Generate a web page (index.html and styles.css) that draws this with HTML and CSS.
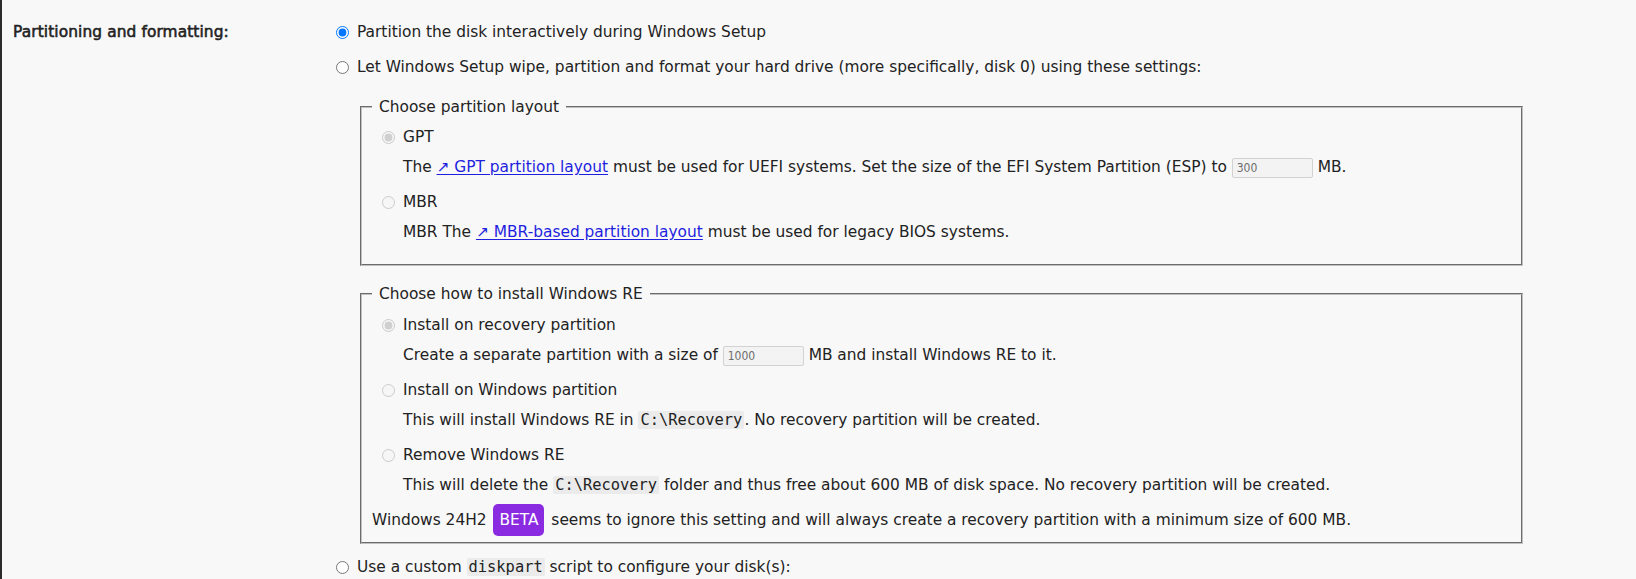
FILE: index.html
```html
<!DOCTYPE html>
<html lang="en">
<head>
<meta charset="utf-8">
<title>Partitioning and formatting</title>
<link rel="stylesheet" href="styles.css">
</head>
<body>
<div class="page">
  <div class="setting">
    <div class="setting-label">Partitioning and formatting:</div>
    <div class="setting-body">
      <label class="opt"><input type="radio" name="part" checked><span>Partition the disk interactively during Windows Setup</span></label>
      <label class="opt"><input type="radio" name="part"><span>Let Windows Setup wipe, partition and format your hard drive (more specifically, disk 0) using these settings:</span></label>

      <fieldset class="group group-layout">
        <legend>Choose partition layout</legend>
        <label class="opt sub"><input type="radio" name="layout" checked disabled><span>GPT</span></label>
        <div class="desc">The <a href="#" class="ext">↗ GPT partition layout</a> must be used for UEFI systems. Set the size of the EFI System Partition (ESP) to <input class="num" type="text" value="300" disabled> MB.</div>
        <label class="opt sub"><input type="radio" name="layout" disabled><span>MBR</span></label>
        <div class="desc">MBR The <a href="#" class="ext">↗ MBR-based partition layout</a> must be used for legacy BIOS systems.</div>
      </fieldset>

      <fieldset class="group group-re">
        <legend>Choose how to install Windows RE</legend>
        <label class="opt sub"><input type="radio" name="re" checked disabled><span>Install on recovery partition</span></label>
        <div class="desc">Create a separate partition with a size of <input class="num" type="text" value="1000" disabled> MB and install Windows RE to it.</div>
        <label class="opt sub"><input type="radio" name="re" disabled><span>Install on Windows partition</span></label>
        <div class="desc">This will install Windows RE in <code>C:\Recovery</code>. No recovery partition will be created.</div>
        <label class="opt sub"><input type="radio" name="re" disabled><span>Remove Windows RE</span></label>
        <div class="desc">This will delete the <code>C:\Recovery</code> folder and thus free about 600 MB of disk space. No recovery partition will be created.</div>
        <div class="note">Windows 24H2 <span class="badge">BETA</span> seems to ignore this setting and will always create a recovery partition with a minimum size of 600 MB.</div>
      </fieldset>

      <label class="opt opt-last"><input type="radio" name="part"><span>Use a custom <code>diskpart</code> script to configure your disk(s):</span></label>
    </div>
  </div>
</div>
</body>
</html>
```

FILE: styles.css
```css
html, body {
  margin: 0;
  padding: 0;
  background: #f8f8f8;
}

body {
  border-left: 2px solid #2b2b2b;
  min-height: 579px;
  box-sizing: border-box;
  font-family: "DejaVu Sans", sans-serif;
  font-size: 15.4px;
  color: #222;
  overflow: hidden;
}

.page {
  padding: 17px 0 0 11px;
}

.setting {
  display: grid;
  grid-template-columns: 323px 1fr;
}

.setting-label {
  height: 30px;
  line-height: 30px;
  letter-spacing: 0.1px;
  -webkit-text-stroke: 0.55px #222;
}

.setting-body {
  display: flex;
  flex-direction: column;
}

.opt {
  display: flex;
  align-items: center;
  height: 30px;
  margin-top: 5px;
  white-space: nowrap;
}

.setting-body > .opt:first-child {
  margin-top: 0;
}

.opt input[type="radio"] {
  width: 13px;
  height: 13px;
  margin: 0 8px 0 0;
  flex: none;
}

.opt.sub {
  padding-left: 10px;
}

.desc {
  height: 30px;
  line-height: 30px;
  padding-left: 31px;
  white-space: nowrap;
}

.group {
  margin: 15px 0 0 24px;
  width: 1163px;
  box-sizing: border-box;
  min-width: 0;
  border: 2px groove rgb(192, 192, 192);
  padding: 5px 10px 17px 10px;
}

.group legend {
  padding: 0 7px;
  line-height: 20px;
  height: 20px;
}

.group-re {
  margin-top: 18px;
  padding-top: 6px;
  padding-bottom: 7px;
}

.group .opt:first-of-type {
  margin-top: 0;
}

.ext {
  color: #1f1fe0;
  text-decoration: underline;
  text-underline-offset: 2px;
}

.num {
  width: 81px;
  height: 20px;
  box-sizing: border-box;
  padding: 1px 4px;
  margin: 0;
  font-family: "DejaVu Sans Condensed", "DejaVu Sans", sans-serif;
  font-size: 12px;
  color: #6d6d6d;
  background: #f3f3f3;
  border: 1px solid #d2d2d2;
  border-radius: 2px;
  vertical-align: middle;
}

code {
  font-family: "DejaVu Sans Mono", monospace;
  font-size: 15.4px;
  background: #ebebeb;
  padding: 0 2px;
  border-radius: 2px;
}

.note {
  margin-top: 5px;
  height: 30px;
  line-height: 30px;
  white-space: nowrap;
}

.badge {
  display: inline-block;
  background: #8a2be2;
  color: #fff;
  line-height: 20px;
  padding: 6px 6px;
  margin: -2px 2px 0 2px;
  border-radius: 5px;
  vertical-align: middle;
}

.opt-last {
  margin-top: 8px;
}
```
